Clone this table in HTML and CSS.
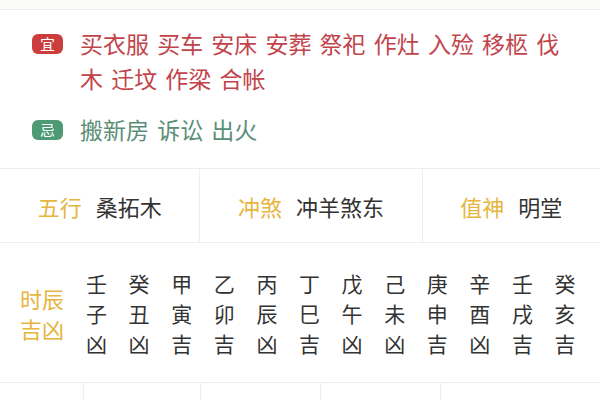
FILE: index.html
```
<!DOCTYPE html>
<html lang="zh-CN">
<head>
<meta charset="utf-8">
<link rel="stylesheet" href="styles.css">
</head>
<body>
<div class="page">
  <section class="card yiji">
    <div class="yj-row">
      <span class="badge badge-yi">宜</span>
      <p class="words words-yi">买衣服 买车 安床 安葬 祭祀 作灶 入殓 移柩 伐木 迁坟 作梁 合帐</p>
    </div>
    <div class="yj-row">
      <span class="badge badge-ji">忌</span>
      <p class="words words-ji">搬新房 诉讼 出火</p>
    </div>
  </section>

  <section class="card info">
    <div class="info-cell"><span class="label">五行</span><span class="value">桑拓木</span></div>
    <div class="info-cell"><span class="label">冲煞</span><span class="value">冲羊煞东</span></div>
    <div class="info-cell"><span class="label">值神</span><span class="value">明堂</span></div>
  </section>

  <section class="card hours">
    <div class="hours-label">时辰<br>吉凶</div>
    <div class="hours-grid">
      <div class="hour">壬<br>子<br>凶</div>
      <div class="hour">癸<br>丑<br>凶</div>
      <div class="hour">甲<br>寅<br>吉</div>
      <div class="hour">乙<br>卯<br>吉</div>
      <div class="hour">丙<br>辰<br>凶</div>
      <div class="hour">丁<br>巳<br>吉</div>
      <div class="hour">戊<br>午<br>凶</div>
      <div class="hour">己<br>未<br>凶</div>
      <div class="hour">庚<br>申<br>吉</div>
      <div class="hour">辛<br>酉<br>凶</div>
      <div class="hour">壬<br>戌<br>吉</div>
      <div class="hour">癸<br>亥<br>吉</div>
    </div>
  </section>

  <section class="card bottom">
    <div class="b-cell b1"></div>
    <div class="b-cell b2"></div>
    <div class="b-cell b3"></div>
    <div class="b-cell b4"></div>
    <div class="b-cell b5"></div>
  </section>
</div>
</body>
</html>
```

FILE: styles.css
```
* { box-sizing: border-box; }
html, body {
  margin: 0;
  padding: 0;
  background: #fbfbf8;
  font-family: "Noto Sans CJK SC", "Noto Sans", sans-serif;
  overflow: hidden;
}
.page {
  width: 600px;
  height: 400px;
  padding-top: 9px;
}
.card {
  background: #ffffff;
  border-top: 1px solid #efefea;
}
.yiji {
  padding: 16px 16px 21px 32px;
  display: flex;
  flex-direction: column;
  gap: 16px;
}
.yj-row {
  display: flex;
  align-items: flex-start;
}
.badge {
  flex: none;
  width: 31px;
  height: 20px;
  margin-top: 8px;
  margin-right: 17px;
  border-radius: 6px;
  color: #ffffff;
  font-size: 15px;
  line-height: 20px;
  text-align: center;
}
.badge-yi { background: #cc3d3d; }
.badge-ji { background: #4e9a74; }
.words {
  margin: 0;
  font-size: 23px;
  line-height: 35px;
  width: 500px;
  word-spacing: 3px;
  word-break: break-all;
}
.words-yi { color: #c2444b; }
.words-ji { color: #5b8e77; }

.info {
  display: flex;
  height: 74px;
}
.info-cell {
  flex: 1 1 auto;
  display: flex;
  align-items: center;
  justify-content: center;
  border-left: 1px solid #efefea;
  font-size: 22px;
}
.info-cell:first-child { border-left: none; }
.label { color: #e6b53e; margin-right: 14px; }
.value { color: #333333; }

.hours {
  display: flex;
  align-items: center;
  height: 140px;
}
.hours-label {
  width: 86px;
  padding-left: 20px;
  color: #e6b53e;
  font-size: 22px;
  line-height: 30px;
}
.hours-grid {
  flex: 1;
  display: grid;
  grid-template-columns: repeat(12, 42.6px);
  color: #333333;
  font-size: 21px;
  line-height: 30px;
}

.bottom {
  display: flex;
  height: 20px;
}
.b-cell { border-left: 1px solid #eeeeea; }
.b1 { width: 83px; border-left: none; }
.b2 { width: 117px; }
.b3 { width: 120px; }
.b4 { width: 120px; }
.b5 { flex: 1; }
```
